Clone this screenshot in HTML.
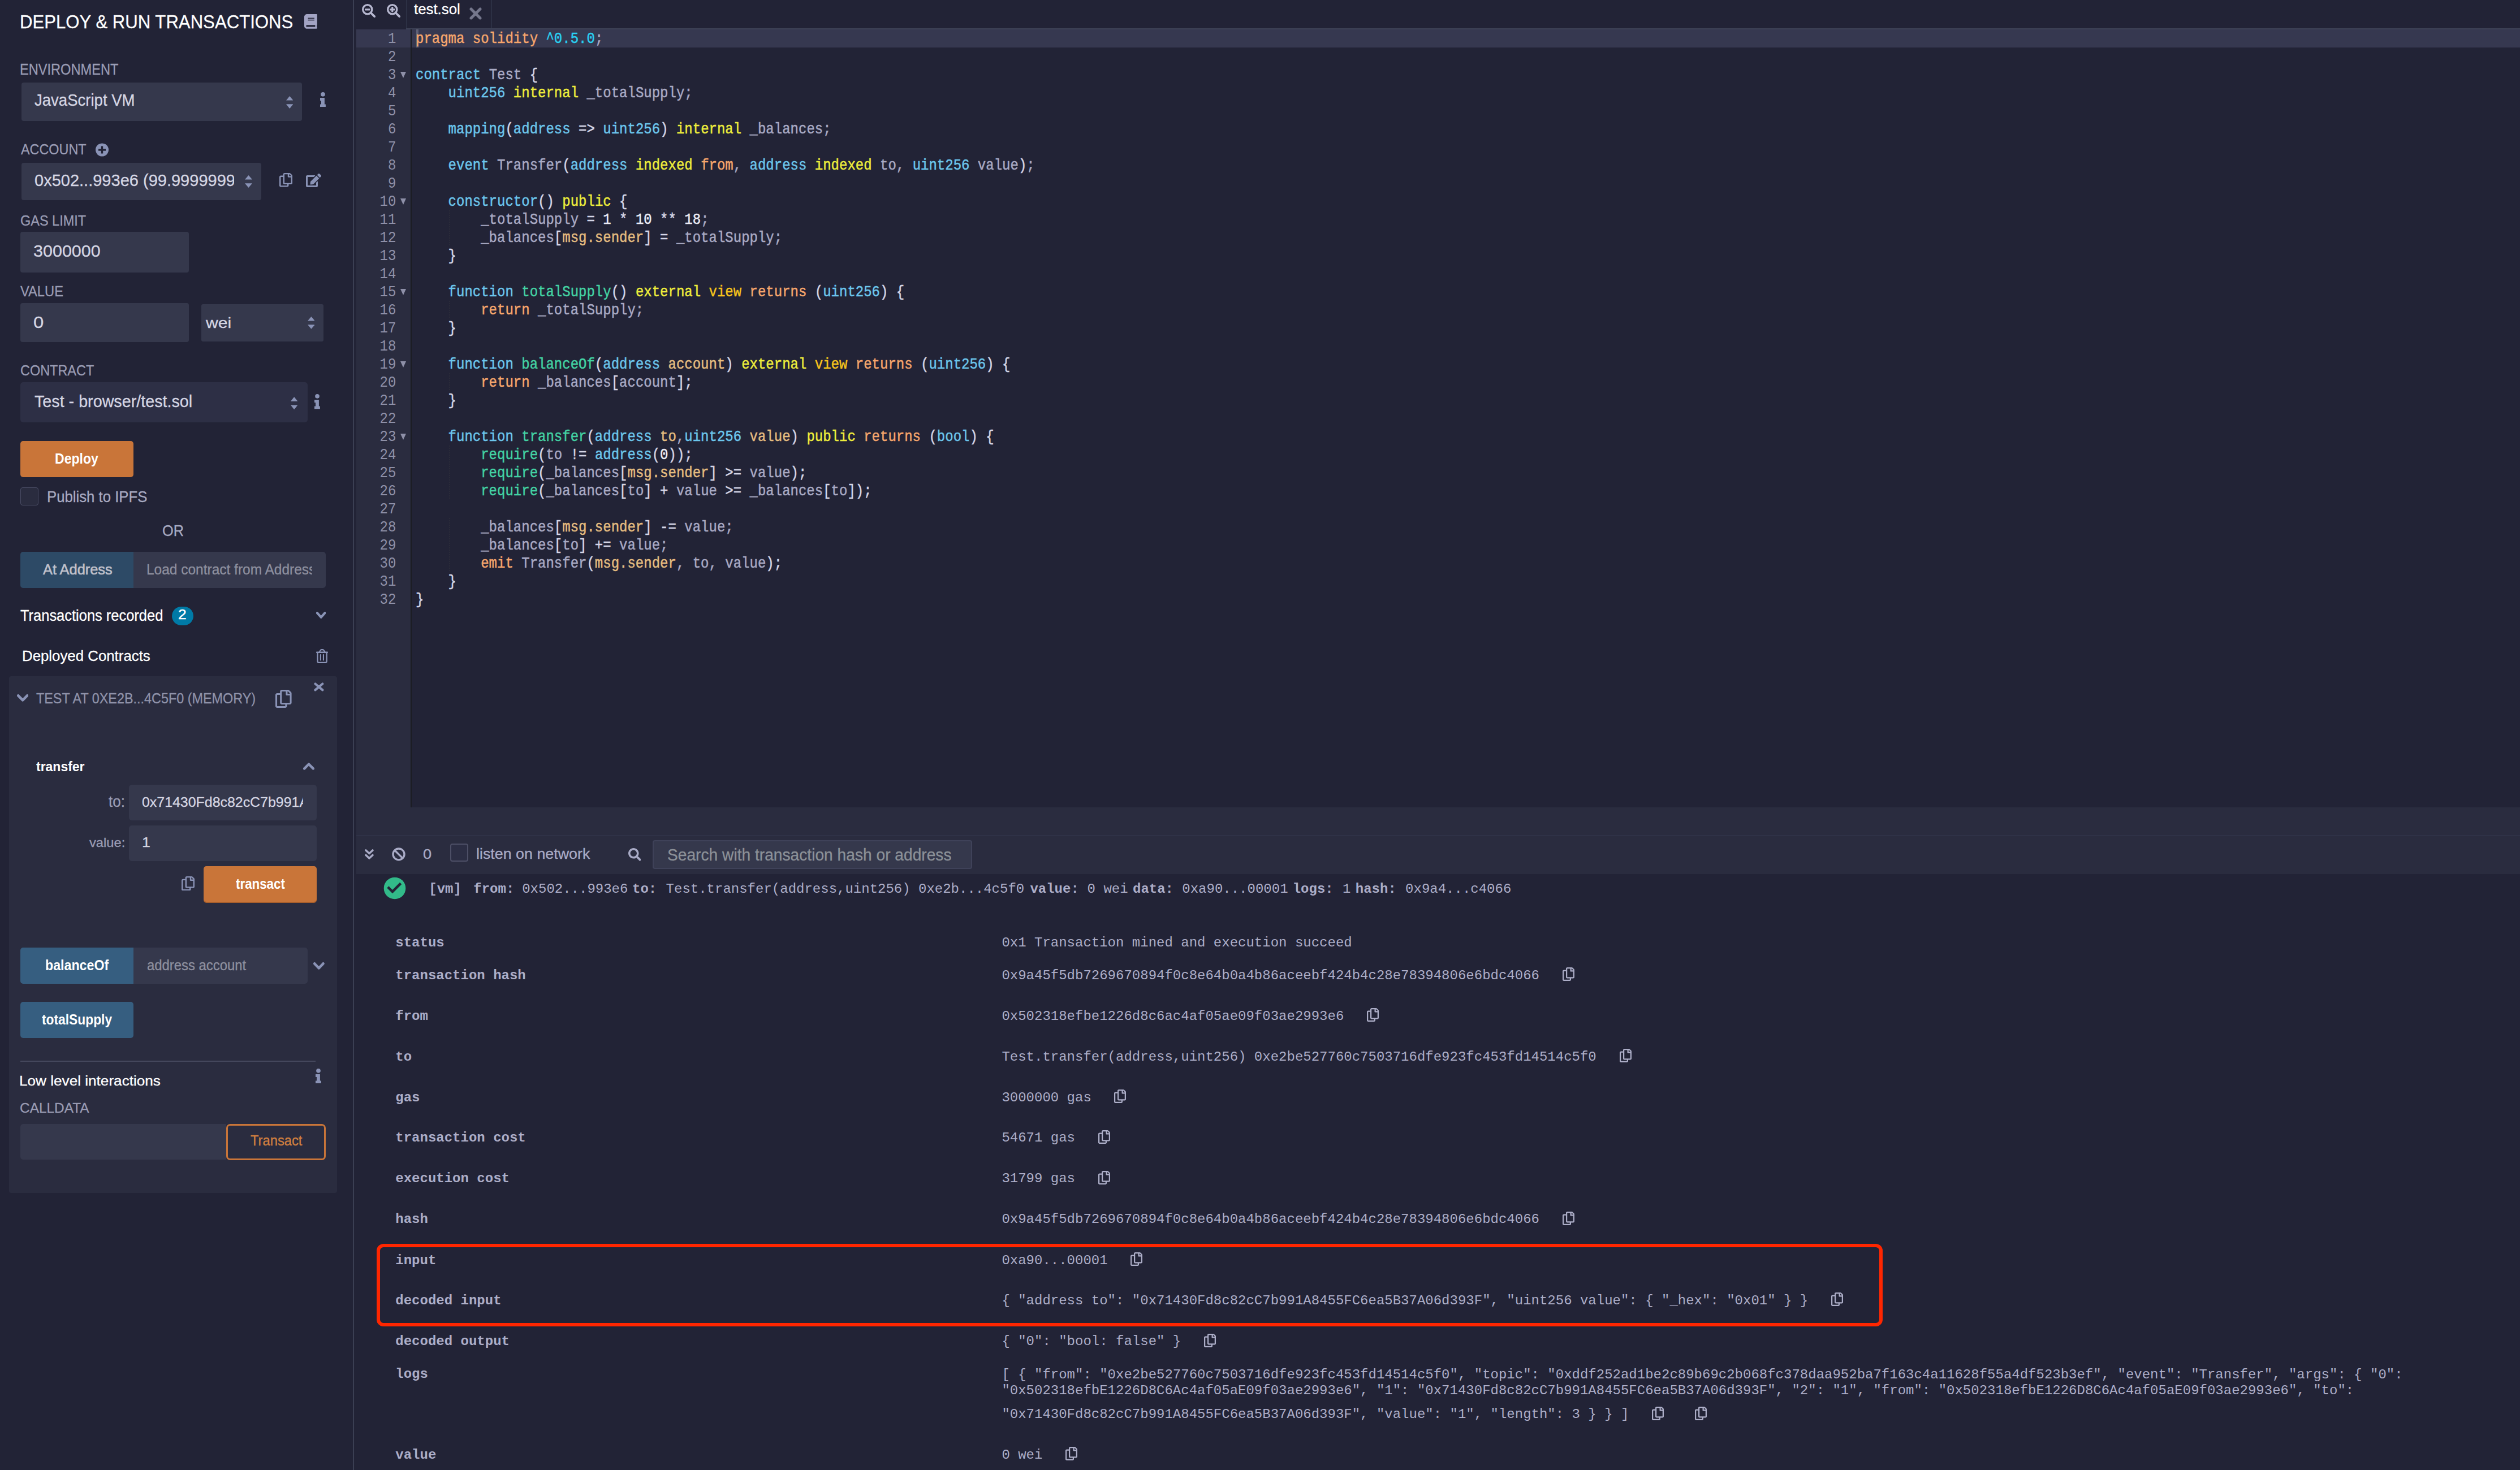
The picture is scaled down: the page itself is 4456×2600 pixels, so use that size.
<!DOCTYPE html>
<html><head><meta charset="utf-8"><style>
html,body{margin:0;padding:0}
body{width:4456px;height:2600px;background:#222336;position:relative;overflow:hidden;font-family:'Liberation Sans',sans-serif}
body div, body svg{position:absolute;box-sizing:border-box}
body div div{position:absolute}
</style></head><body>
<div style="left:35.41px;top:22.03px;font-family:'Liberation Sans';font-weight:normal;font-size:33.14px;line-height:33.14px;color:#ffffff;white-space:pre;transform:scaleX(0.9399);transform-origin:0 0;-webkit-text-stroke:0.3px;">DEPLOY &amp; RUN TRANSACTIONS</div>
<svg style="left:538.2px;top:25.3px;width:22.799999999999955px;height:25.8px;" viewBox="0 0 448 512" preserveAspectRatio="none"><path d="M448 360V24c0-13.3-10.7-24-24-24H96C43 0 0 43 0 96v320c0 53 43 96 96 96h328c13.3 0 24-10.7 24-24v-16c0-7.5-3.5-14.3-8.9-18.7-4.2-15.4-4.2-59.3 0-74.7 5.4-4.3 8.9-11.1 8.9-18.6zM128 134c0-3.3 2.7-6 6-6h212c3.3 0 6 2.7 6 6v20c0 3.3-2.7 6-6 6H134c-3.3 0-6-2.7-6-6v-20zm0 64c0-3.3 2.7-6 6-6h212c3.3 0 6 2.7 6 6v20c0 3.3-2.7 6-6 6H134c-3.3 0-6-2.7-6-6v-20zm253.4 250H96c-17.7 0-32-14.3-32-32 0-17.6 14.4-32 32-32h285.4c-1.9 17.1-1.9 46.9 0 64z" fill="#a3a4c4"/></svg>
<div style="left:34.81px;top:109.97px;font-family:'Liberation Sans';font-weight:normal;font-size:26.86px;line-height:26.86px;color:#9a9cb4;white-space:pre;transform:scaleX(0.8785);transform-origin:0 0;-webkit-text-stroke:0.3px;">ENVIRONMENT</div>
<div style="left:38px;top:146px;width:496px;height:68px;background:#35384c;border-radius:4px"></div>
<div style="left:61.45px;top:163.21px;font-family:'Liberation Sans';font-weight:normal;font-size:29.17px;line-height:29.17px;color:#d5d6e3;white-space:pre;transform:scaleX(0.9447);transform-origin:0 0;-webkit-text-stroke:0.3px;">JavaScript VM</div>
<svg style="left:505.6px;top:170px;width:12.399999999999977px;height:22px;" viewBox="0 0 12.4 22.4" preserveAspectRatio="none"><polygon points="0,7.7 6.2,0 12.4,7.7" fill="#8a93b6"/><polygon points="0,14.6 6.2,22.4 12.4,14.6" fill="#8a93b6"/></svg>
<svg style="left:566px;top:163px;width:10px;height:26.19999999999999px;" viewBox="0 0 10 26.2" preserveAspectRatio="none"><circle cx="5" cy="3.85" r="3.85" fill="#8a93b6"/><polygon points="0,10 7.9,10 7.9,21.6 9.9,21.6 9.9,26.2 0,26.2 0,21.6 2,21.6 2,15 0,15" fill="#8a93b6"/></svg>
<div style="left:37.00px;top:252.14px;font-family:'Liberation Sans';font-weight:normal;font-size:25.71px;line-height:25.71px;color:#9a9cb4;white-space:pre;transform:scaleX(0.9090);transform-origin:0 0;-webkit-text-stroke:0.3px;">ACCOUNT</div>
<svg style="left:169px;top:253px;width:23px;height:24px;" viewBox="0 0 23 24" preserveAspectRatio="none"><circle cx="11.5" cy="12" r="11.5" fill="#8a93b6"/><rect x="9.8" y="5.5" width="3.4" height="13" fill="#222336"/><rect x="5" y="10.3" width="13" height="3.4" fill="#222336"/></svg>
<div style="left:38px;top:288px;width:424px;height:66px;background:#35384c;border-radius:4px"></div>
<div style="left:42.6px;top:289px;width:371.4px;height:60px;overflow:hidden"><div style="left:18.84px;top:15.71px;font-family:'Liberation Sans';font-weight:normal;font-size:28.57px;line-height:28.57px;color:#d5d6e3;white-space:pre;transform:scaleX(1.0158);transform-origin:0 0;-webkit-text-stroke:0.3px;">0x502...993e6 (99.9999999999</div></div>
<svg style="left:433px;top:310px;width:13px;height:22px;" viewBox="0 0 12.4 22.4" preserveAspectRatio="none"><polygon points="0,7.7 6.2,0 12.4,7.7" fill="#8a93b6"/><polygon points="0,14.6 6.2,22.4 12.4,14.6" fill="#8a93b6"/></svg>
<svg style="left:494px;top:306px;width:23px;height:24.600000000000023px;" viewBox="0 0 448 512" preserveAspectRatio="none"><path d="M433.941 65.941l-51.882-51.882A48 48 0 0 0 348.118 0H176c-26.51 0-48 21.49-48 48v48H48c-26.51 0-48 21.49-48 48v320c0 26.51 21.49 48 48 48h224c26.51 0 48-21.49 48-48v-48h80c26.51 0 48-21.49 48-48V99.882a48 48 0 0 0-14.059-33.941zM266 464H54a6 6 0 0 1-6-6V150a6 6 0 0 1 6-6h74v224c0 26.51 21.49 48 48 48h96v42a6 6 0 0 1-6 6zm128-96H182a6 6 0 0 1-6-6V54a6 6 0 0 1 6-6h106v88c0 13.255 10.745 24 24 24h88v202a6 6 0 0 1-6 6zm6-256h-64V48h9.632c1.591 0 3.117.632 4.243 1.757l48.368 48.368a6 6 0 0 1 1.757 4.243V112z" fill="#8a93b6"/></svg>
<svg style="left:541px;top:307px;width:27px;height:24px;" viewBox="0 0 576 512" preserveAspectRatio="none"><path d="M402.6 83.2l90.2 90.2c3.8 3.8 3.8 10 0 13.8L274.4 405.6l-92.8 10.3c-12.4 1.4-22.9-9.1-21.5-21.5l10.3-92.8L388.8 83.2c3.8-3.8 10-3.8 13.8 0zm162-22.9l-48.8-48.8c-15.2-15.2-39.9-15.2-55.2 0l-35.4 35.4c-3.8 3.8-3.8 10 0 13.8l90.2 90.2c3.8 3.8 10 3.8 13.8 0l35.4-35.4c15.2-15.3 15.2-40 0-55.2zM384 346.2V448H64V128h229.8c3.2 0 6.2-1.3 8.5-3.5l40-40c7.6-7.6 2.2-20.5-8.5-20.5H48C21.5 64 0 85.5 0 112v352c0 26.5 21.5 48 48 48h352c26.5 0 48-21.5 48-48V306.2c0-10.7-12.9-16-20.5-8.5l-40 40c-2.2 2.3-3.5 5.3-3.5 8.5z" fill="#8a93b6"/></svg>
<div style="left:35.53px;top:376.50px;font-family:'Liberation Sans';font-weight:normal;font-size:26.00px;line-height:26.00px;color:#9a9cb4;white-space:pre;transform:scaleX(0.9027);transform-origin:0 0;-webkit-text-stroke:0.3px;">GAS LIMIT</div>
<div style="left:36px;top:410px;width:298px;height:72px;background:#35384c;border-radius:4px"></div>
<div style="left:59.18px;top:429.02px;font-family:'Liberation Sans';font-weight:normal;font-size:29.86px;line-height:29.86px;color:#d5d6e3;white-space:pre;transform:scaleX(1.0214);transform-origin:0 0;-webkit-text-stroke:0.3px;">3000000</div>
<div style="left:36.46px;top:502.18px;font-family:'Liberation Sans';font-weight:normal;font-size:26.38px;line-height:26.38px;color:#9a9cb4;white-space:pre;transform:scaleX(0.8986);transform-origin:0 0;-webkit-text-stroke:0.3px;">VALUE</div>
<div style="left:36px;top:536px;width:298px;height:69px;background:#35384c;border-radius:4px"></div>
<div style="left:59.08px;top:555.02px;font-family:'Liberation Sans';font-weight:normal;font-size:29.86px;line-height:29.86px;color:#d5d6e3;white-space:pre;transform:scaleX(1.1025);transform-origin:0 0;-webkit-text-stroke:0.3px;">0</div>
<div style="left:356px;top:538px;width:216px;height:66px;background:#35384c;border-radius:3px"></div>
<div style="left:364.00px;top:557.57px;font-family:'Liberation Sans';font-weight:normal;font-size:26.39px;line-height:26.39px;color:#d5d6e3;white-space:pre;transform:scaleX(1.1395);transform-origin:0 0;-webkit-text-stroke:0.3px;">wei</div>
<svg style="left:543.7px;top:560px;width:12.799999999999955px;height:21.799999999999955px;" viewBox="0 0 12.4 22.4" preserveAspectRatio="none"><polygon points="0,7.7 6.2,0 12.4,7.7" fill="#8a93b6"/><polygon points="0,14.6 6.2,22.4 12.4,14.6" fill="#8a93b6"/></svg>
<div style="left:35.53px;top:642.71px;font-family:'Liberation Sans';font-weight:normal;font-size:25.29px;line-height:25.29px;color:#9a9cb4;white-space:pre;transform:scaleX(0.9274);transform-origin:0 0;-webkit-text-stroke:0.3px;">CONTRACT</div>
<div style="left:36px;top:676px;width:508px;height:71px;background:#2d2f45;border-radius:5px"></div>
<div style="left:61.43px;top:695.83px;font-family:'Liberation Sans';font-weight:normal;font-size:29.03px;line-height:29.03px;color:#d5d6e3;white-space:pre;transform:scaleX(0.9892);transform-origin:0 0;-webkit-text-stroke:0.3px;">Test - browser/test.sol</div>
<svg style="left:513.7px;top:701.5px;width:12.299999999999955px;height:22.299999999999955px;" viewBox="0 0 12.4 22.4" preserveAspectRatio="none"><polygon points="0,7.7 6.2,0 12.4,7.7" fill="#8a93b6"/><polygon points="0,14.6 6.2,22.4 12.4,14.6" fill="#8a93b6"/></svg>
<svg style="left:556px;top:697.4px;width:10px;height:26.200000000000045px;" viewBox="0 0 10 26.2" preserveAspectRatio="none"><circle cx="5" cy="3.85" r="3.85" fill="#8a93b6"/><polygon points="0,10 7.9,10 7.9,21.6 9.9,21.6 9.9,26.2 0,26.2 0,21.6 2,21.6 2,15 0,15" fill="#8a93b6"/></svg>
<div style="left:36px;top:780px;width:200px;height:64px;background:#c97539;border-radius:5px"></div>
<div style="left:96.89px;top:799.28px;font-family:'Liberation Sans';font-weight:bold;font-size:25.56px;line-height:25.56px;color:#ffffff;white-space:pre;transform:scaleX(0.9014);transform-origin:0 0;-webkit-text-stroke:0px;">Deploy</div>
<div style="left:36px;top:862px;width:32px;height:32px;background:#2a2c3f;border:1.5px solid #4a4d65;border-radius:4px"></div>
<div style="left:82.94px;top:865.52px;font-family:'Liberation Sans';font-weight:normal;font-size:26.81px;line-height:26.81px;color:#a9abc2;white-space:pre;transform:scaleX(0.9602);transform-origin:0 0;-webkit-text-stroke:0.3px;">Publish to IPFS</div>
<div style="left:287.14px;top:925.69px;font-family:'Liberation Sans';font-weight:normal;font-size:26.71px;line-height:26.71px;color:#a9abc2;white-space:pre;transform:scaleX(0.9465);transform-origin:0 0;-webkit-text-stroke:0.3px;">OR</div>
<div style="left:36px;top:976px;width:540px;height:64px;background:#35384c;border-radius:5px"></div>
<div style="left:36px;top:976px;width:200px;height:64px;background:#2d4a66;border-radius:5px 0 0 5px"></div>
<div style="left:76.00px;top:995.21px;font-family:'Liberation Sans';font-weight:normal;font-size:25.28px;line-height:25.28px;color:#c0c1cb;white-space:pre;transform:scaleX(1.0038);transform-origin:0 0;-webkit-text-stroke:0.3px;-webkit-text-stroke:0.6px">At Address</div>
<div style="left:240.7px;top:978.5px;width:311.7px;height:58.200000000000045px;overflow:hidden"><div style="left:18.04px;top:16.71px;font-family:'Liberation Sans';font-weight:normal;font-size:25.28px;line-height:25.28px;color:#8e909f;white-space:pre;transform:scaleX(0.9686);transform-origin:0 0;-webkit-text-stroke:0.3px;">Load contract from Address</div></div>
<div style="left:35.69px;top:1075.82px;font-family:'Liberation Sans';font-weight:normal;font-size:26.81px;line-height:26.81px;color:#ffffff;white-space:pre;transform:scaleX(0.9499);transform-origin:0 0;-webkit-text-stroke:0.3px;">Transactions recorded</div>
<div style="left:304px;top:1072.5px;width:38px;height:33.5px;background:#007aa6;border-radius:17px"></div>
<div style="left:315.48px;top:1075.31px;font-family:'Liberation Sans';font-weight:normal;font-size:24.57px;line-height:24.57px;color:#ffffff;white-space:pre;transform:scaleX(1.0705);transform-origin:0 0;-webkit-text-stroke:0.3px;-webkit-text-stroke:0.5px">2</div>
<svg style="left:558.6px;top:1081.5px;width:17.399999999999977px;height:12.200000000000045px;" viewBox="0 0 20 12.5" preserveAspectRatio="none"><polyline points="2.2,2.2 10,10 17.8,2.2" fill="none" stroke="#8a93b6" stroke-width="4.5" stroke-linecap="round" stroke-linejoin="round"/></svg>
<div style="left:38.73px;top:1146.57px;font-family:'Liberation Sans';font-weight:normal;font-size:26.39px;line-height:26.39px;color:#ffffff;white-space:pre;transform:scaleX(0.9789);transform-origin:0 0;-webkit-text-stroke:0.3px;">Deployed Contracts</div>
<svg style="left:559px;top:1148px;width:21px;height:25px;" viewBox="0 0 21 25" preserveAspectRatio="none"><rect x="0" y="4.6" width="21" height="2.4" rx="1" fill="#8a93b6"/><path d="M5.6 5.5L7.6 2.3Q8.2 1.2 9.4 1.2H11.8Q13 1.2 13.6 2.3L15.6 5.5" fill="none" stroke="#8a93b6" stroke-width="2.2"/><path d="M2.5 6.5V21.8Q2.5 23.9 4.6 23.9H16.6Q18.7 23.9 18.7 21.8V6.5" fill="none" stroke="#8a93b6" stroke-width="2.3"/><rect x="6.8" y="9" width="2.1" height="11.6" rx="1" fill="#8a93b6"/><rect x="11.9" y="9" width="2.1" height="11.6" rx="1" fill="#8a93b6"/></svg>
<div style="left:16px;top:1196px;width:580px;height:914px;background:#2a2c3f;border-radius:4px"></div>
<svg style="left:30px;top:1227.5px;width:20.299999999999997px;height:13.0px;" viewBox="0 0 20 12.5" preserveAspectRatio="none"><polyline points="2.2,2.2 10,10 17.8,2.2" fill="none" stroke="#8a93b6" stroke-width="4.5" stroke-linecap="round" stroke-linejoin="round"/></svg>
<div style="left:63.53px;top:1223.47px;font-family:'Liberation Sans';font-weight:normal;font-size:24.86px;line-height:24.86px;color:#8f92a9;white-space:pre;transform:scaleX(0.9404);transform-origin:0 0;-webkit-text-stroke:0.3px;">TEST AT 0XE2B...4C5F0 (MEMORY)</div>
<svg style="left:487px;top:1220px;width:28.600000000000023px;height:32px;" viewBox="0 0 448 512" preserveAspectRatio="none"><path d="M433.941 65.941l-51.882-51.882A48 48 0 0 0 348.118 0H176c-26.51 0-48 21.49-48 48v48H48c-26.51 0-48 21.49-48 48v320c0 26.51 21.49 48 48 48h224c26.51 0 48-21.49 48-48v-48h80c26.51 0 48-21.49 48-48V99.882a48 48 0 0 0-14.059-33.941zM266 464H54a6 6 0 0 1-6-6V150a6 6 0 0 1 6-6h74v224c0 26.51 21.49 48 48 48h96v42a6 6 0 0 1-6 6zm128-96H182a6 6 0 0 1-6-6V54a6 6 0 0 1 6-6h106v88c0 13.255 10.745 24 24 24h88v202a6 6 0 0 1-6 6zm6-256h-64V48h9.632c1.591 0 3.117.632 4.243 1.757l48.368 48.368a6 6 0 0 1 1.757 4.243V112z" fill="#8a93b6"/></svg>
<svg style="left:555px;top:1207px;width:17.799999999999955px;height:15.900000000000091px;" viewBox="0 0 18 16" preserveAspectRatio="none"><path d="M2.5 2.5l13 11M15.5 2.5l-13 11" stroke="#8a93b6" stroke-width="4.2" stroke-linecap="round"/></svg>
<div style="left:63.77px;top:1343.86px;font-family:'Liberation Sans';font-weight:bold;font-size:24.17px;line-height:24.17px;color:#ffffff;white-space:pre;transform:scaleX(0.9506);transform-origin:0 0;-webkit-text-stroke:0px;">transfer</div>
<svg style="left:536px;top:1349.4px;width:20px;height:12.599999999999909px;" viewBox="0 0 20 12.5" preserveAspectRatio="none"><polyline points="2.2,10.3 10,2.5 17.8,10.3" fill="none" stroke="#8a93b6" stroke-width="4.5" stroke-linecap="round" stroke-linejoin="round"/></svg>
<div style="left:192.44px;top:1405.25px;font-family:'Liberation Sans';font-weight:normal;font-size:26.77px;line-height:26.77px;color:#9a9cb4;white-space:pre;transform:scaleX(0.9727);transform-origin:0 0;-webkit-text-stroke:0.3px;">to:</div>
<div style="left:228px;top:1388px;width:332px;height:63px;background:#35384c;border-radius:5px"></div>
<div style="left:231.7px;top:1390.6px;width:304.3px;height:57.700000000000045px;overflow:hidden"><div style="left:19.00px;top:16.80px;font-family:'Liberation Sans';font-weight:normal;font-size:24.58px;line-height:24.58px;color:#d5d6e3;white-space:pre;transform:scaleX(1.0135);transform-origin:0 0;-webkit-text-stroke:0.3px;">0x71430Fd8c82cC7b991A8455FC6ea5B37A06d393F</div></div>
<div style="left:157.80px;top:1480.36px;font-family:'Liberation Sans';font-weight:normal;font-size:22.64px;line-height:22.64px;color:#9a9cb4;white-space:pre;transform:scaleX(1.0478);transform-origin:0 0;-webkit-text-stroke:0.3px;">value:</div>
<div style="left:228px;top:1460px;width:332px;height:63px;background:#35384c;border-radius:5px"></div>
<div style="left:250.86px;top:1478.92px;font-family:'Liberation Sans';font-weight:normal;font-size:23.62px;line-height:23.62px;color:#d5d6e3;white-space:pre;transform:scaleX(1.1321);transform-origin:0 0;-webkit-text-stroke:0.3px;">1</div>
<svg style="left:321px;top:1549.5px;width:23px;height:25.299999999999955px;" viewBox="0 0 448 512" preserveAspectRatio="none"><path d="M433.941 65.941l-51.882-51.882A48 48 0 0 0 348.118 0H176c-26.51 0-48 21.49-48 48v48H48c-26.51 0-48 21.49-48 48v320c0 26.51 21.49 48 48 48h224c26.51 0 48-21.49 48-48v-48h80c26.51 0 48-21.49 48-48V99.882a48 48 0 0 0-14.059-33.941zM266 464H54a6 6 0 0 1-6-6V150a6 6 0 0 1 6-6h74v224c0 26.51 21.49 48 48 48h96v42a6 6 0 0 1-6 6zm128-96H182a6 6 0 0 1-6-6V54a6 6 0 0 1 6-6h106v88c0 13.255 10.745 24 24 24h88v202a6 6 0 0 1-6 6zm6-256h-64V48h9.632c1.591 0 3.117.632 4.243 1.757l48.368 48.368a6 6 0 0 1 1.757 4.243V112z" fill="#8a93b6"/></svg>
<div style="left:360px;top:1532px;width:200px;height:63px;background:#c97539;border-radius:5px;box-shadow:0 2px 0 #a85f2c"></div>
<div style="left:417.48px;top:1550.82px;font-family:'Liberation Sans';font-weight:bold;font-size:24.92px;line-height:24.92px;color:#ffffff;white-space:pre;transform:scaleX(0.8968);transform-origin:0 0;-webkit-text-stroke:0px;">transact</div>
<div style="left:36px;top:1676px;width:508px;height:64px;background:#35384c;border-radius:5px"></div>
<div style="left:36px;top:1676px;width:200px;height:64px;background:#365e80;border-radius:5px 0 0 5px"></div>
<div style="left:80.38px;top:1694.70px;font-family:'Liberation Sans';font-weight:bold;font-size:25.42px;line-height:25.42px;color:#ffffff;white-space:pre;transform:scaleX(0.9131);transform-origin:0 0;-webkit-text-stroke:0px;">balanceOf</div>
<div style="left:259.74px;top:1694.70px;font-family:'Liberation Sans';font-weight:normal;font-size:25.42px;line-height:25.42px;color:#8e909f;white-space:pre;transform:scaleX(0.9396);transform-origin:0 0;-webkit-text-stroke:0.3px;">address account</div>
<svg style="left:554.3px;top:1702px;width:19.700000000000045px;height:13px;" viewBox="0 0 20 12.5" preserveAspectRatio="none"><polyline points="2.2,2.2 10,10 17.8,2.2" fill="none" stroke="#8a93b6" stroke-width="4.5" stroke-linecap="round" stroke-linejoin="round"/></svg>
<div style="left:36px;top:1772px;width:200px;height:64px;background:#365e80;border-radius:5px"></div>
<div style="left:73.77px;top:1790.56px;font-family:'Liberation Sans';font-weight:bold;font-size:25.69px;line-height:25.69px;color:#ffffff;white-space:pre;transform:scaleX(0.8873);transform-origin:0 0;-webkit-text-stroke:0px;">totalSupply</div>
<div style="left:36px;top:1876px;width:522px;height:2px;background:#44475c;"></div>
<div style="left:34.11px;top:1899.79px;font-family:'Liberation Sans';font-weight:normal;font-size:24.72px;line-height:24.72px;color:#ffffff;white-space:pre;transform:scaleX(1.0575);transform-origin:0 0;-webkit-text-stroke:0.3px;">Low level interactions</div>
<svg style="left:557.8px;top:1889.5px;width:10.0px;height:26.200000000000045px;" viewBox="0 0 10 26.2" preserveAspectRatio="none"><circle cx="5" cy="3.85" r="3.85" fill="#8a93b6"/><polygon points="0,10 7.9,10 7.9,21.6 9.9,21.6 9.9,26.2 0,26.2 0,21.6 2,21.6 2,15 0,15" fill="#8a93b6"/></svg>
<div style="left:34.98px;top:1947.64px;font-family:'Liberation Sans';font-weight:normal;font-size:24.43px;line-height:24.43px;color:#9a9cb4;white-space:pre;transform:scaleX(0.9995);transform-origin:0 0;-webkit-text-stroke:0.3px;">CALLDATA</div>
<div style="left:36px;top:1988px;width:364px;height:63px;background:#35384c;border-radius:5px 0 0 5px"></div>
<div style="left:400px;top:1988px;width:176px;height:64px;background:transparent;border:3px solid #c97539;border-radius:7px"></div>
<div style="left:442.53px;top:2004.97px;font-family:'Liberation Sans';font-weight:normal;font-size:25.22px;line-height:25.22px;color:#d3803f;white-space:pre;transform:scaleX(0.9412);transform-origin:0 0;-webkit-text-stroke:0.3px;">Transact</div>
<div style="left:624px;top:0px;width:2px;height:2600px;background:#3b3f53;"></div>
<svg style="left:640px;top:6.9px;width:24px;height:24.0px;" viewBox="0 0 24 24" preserveAspectRatio="none"><circle cx="9.75" cy="9.75" r="8.1" fill="none" stroke="#b7b8d0" stroke-width="3.3"/><line x1="15.5" y1="15.5" x2="22.2" y2="22.2" stroke="#b7b8d0" stroke-width="3.8" stroke-linecap="round"/><rect x="5" y="8.2" width="9.5" height="3.2" rx="1" fill="#b7b8d0"/></svg>
<svg style="left:683.8px;top:6.9px;width:24.0px;height:24.0px;" viewBox="0 0 24 24" preserveAspectRatio="none"><circle cx="9.75" cy="9.75" r="8.1" fill="none" stroke="#b7b8d0" stroke-width="3.3"/><line x1="15.5" y1="15.5" x2="22.2" y2="22.2" stroke="#b7b8d0" stroke-width="3.8" stroke-linecap="round"/><rect x="5" y="8.2" width="9.5" height="3.2" rx="1" fill="#b7b8d0"/><rect x="8.15" y="5" width="3.2" height="9.5" rx="1" fill="#b7b8d0"/></svg>
<div style="left:718px;top:0px;width:2px;height:52px;background:#2c3044;"></div>
<div style="left:868px;top:0px;width:2px;height:52px;background:#2c3044;"></div>
<div style="left:718px;top:50px;width:3738px;height:2px;background:#3d4256;"></div>
<div style="left:732.14px;top:4.06px;font-family:'Liberation Sans';font-weight:normal;font-size:25.69px;line-height:25.69px;color:#ffffff;white-space:pre;transform:scaleX(1.0044);transform-origin:0 0;-webkit-text-stroke:0.3px;">test.sol</div>
<svg style="left:830px;top:13.1px;width:22px;height:21.9px;" viewBox="0 0 22 22" preserveAspectRatio="none"><path d="M3 3l16 16M19 3L3 19" stroke="#75778c" stroke-width="5" stroke-linecap="round"/></svg>
<div style="left:630px;top:52px;width:96px;height:1376px;background:#2a2c3f;"></div>
<div style="left:726px;top:52px;width:2px;height:1376px;background:#1b1c22;"></div>
<div style="left:630px;top:52px;width:96px;height:32px;background:#363850;"></div>
<div style="left:728px;top:52px;width:3728px;height:32px;background:#363850;"></div>
<div style="left:736px;top:52px;width:4px;height:32px;background:#5d6075;"></div>
<div style="left:600.4px;top:57.76px;width:100px;text-align:right;font:24px/24px 'Liberation Mono';color:#8e90a8;white-space:pre;transform:scaleY(1.12);transform-origin:0 18.24px">1</div>
<div style="left:600.4px;top:89.76px;width:100px;text-align:right;font:24px/24px 'Liberation Mono';color:#8e90a8;white-space:pre;transform:scaleY(1.12);transform-origin:0 18.24px">2</div>
<div style="left:600.4px;top:121.76px;width:100px;text-align:right;font:24px/24px 'Liberation Mono';color:#8e90a8;white-space:pre;transform:scaleY(1.12);transform-origin:0 18.24px">3</div>
<div style="left:600.4px;top:153.76px;width:100px;text-align:right;font:24px/24px 'Liberation Mono';color:#8e90a8;white-space:pre;transform:scaleY(1.12);transform-origin:0 18.24px">4</div>
<div style="left:600.4px;top:185.76px;width:100px;text-align:right;font:24px/24px 'Liberation Mono';color:#8e90a8;white-space:pre;transform:scaleY(1.12);transform-origin:0 18.24px">5</div>
<div style="left:600.4px;top:217.76px;width:100px;text-align:right;font:24px/24px 'Liberation Mono';color:#8e90a8;white-space:pre;transform:scaleY(1.12);transform-origin:0 18.24px">6</div>
<div style="left:600.4px;top:249.76px;width:100px;text-align:right;font:24px/24px 'Liberation Mono';color:#8e90a8;white-space:pre;transform:scaleY(1.12);transform-origin:0 18.24px">7</div>
<div style="left:600.4px;top:281.76px;width:100px;text-align:right;font:24px/24px 'Liberation Mono';color:#8e90a8;white-space:pre;transform:scaleY(1.12);transform-origin:0 18.24px">8</div>
<div style="left:600.4px;top:313.76px;width:100px;text-align:right;font:24px/24px 'Liberation Mono';color:#8e90a8;white-space:pre;transform:scaleY(1.12);transform-origin:0 18.24px">9</div>
<div style="left:600.4px;top:345.76px;width:100px;text-align:right;font:24px/24px 'Liberation Mono';color:#8e90a8;white-space:pre;transform:scaleY(1.12);transform-origin:0 18.24px">10</div>
<div style="left:600.4px;top:377.76px;width:100px;text-align:right;font:24px/24px 'Liberation Mono';color:#8e90a8;white-space:pre;transform:scaleY(1.12);transform-origin:0 18.24px">11</div>
<div style="left:600.4px;top:409.76px;width:100px;text-align:right;font:24px/24px 'Liberation Mono';color:#8e90a8;white-space:pre;transform:scaleY(1.12);transform-origin:0 18.24px">12</div>
<div style="left:600.4px;top:441.76px;width:100px;text-align:right;font:24px/24px 'Liberation Mono';color:#8e90a8;white-space:pre;transform:scaleY(1.12);transform-origin:0 18.24px">13</div>
<div style="left:600.4px;top:473.76px;width:100px;text-align:right;font:24px/24px 'Liberation Mono';color:#8e90a8;white-space:pre;transform:scaleY(1.12);transform-origin:0 18.24px">14</div>
<div style="left:600.4px;top:505.76px;width:100px;text-align:right;font:24px/24px 'Liberation Mono';color:#8e90a8;white-space:pre;transform:scaleY(1.12);transform-origin:0 18.24px">15</div>
<div style="left:600.4px;top:537.76px;width:100px;text-align:right;font:24px/24px 'Liberation Mono';color:#8e90a8;white-space:pre;transform:scaleY(1.12);transform-origin:0 18.24px">16</div>
<div style="left:600.4px;top:569.76px;width:100px;text-align:right;font:24px/24px 'Liberation Mono';color:#8e90a8;white-space:pre;transform:scaleY(1.12);transform-origin:0 18.24px">17</div>
<div style="left:600.4px;top:601.76px;width:100px;text-align:right;font:24px/24px 'Liberation Mono';color:#8e90a8;white-space:pre;transform:scaleY(1.12);transform-origin:0 18.24px">18</div>
<div style="left:600.4px;top:633.76px;width:100px;text-align:right;font:24px/24px 'Liberation Mono';color:#8e90a8;white-space:pre;transform:scaleY(1.12);transform-origin:0 18.24px">19</div>
<div style="left:600.4px;top:665.76px;width:100px;text-align:right;font:24px/24px 'Liberation Mono';color:#8e90a8;white-space:pre;transform:scaleY(1.12);transform-origin:0 18.24px">20</div>
<div style="left:600.4px;top:697.76px;width:100px;text-align:right;font:24px/24px 'Liberation Mono';color:#8e90a8;white-space:pre;transform:scaleY(1.12);transform-origin:0 18.24px">21</div>
<div style="left:600.4px;top:729.76px;width:100px;text-align:right;font:24px/24px 'Liberation Mono';color:#8e90a8;white-space:pre;transform:scaleY(1.12);transform-origin:0 18.24px">22</div>
<div style="left:600.4px;top:761.76px;width:100px;text-align:right;font:24px/24px 'Liberation Mono';color:#8e90a8;white-space:pre;transform:scaleY(1.12);transform-origin:0 18.24px">23</div>
<div style="left:600.4px;top:793.76px;width:100px;text-align:right;font:24px/24px 'Liberation Mono';color:#8e90a8;white-space:pre;transform:scaleY(1.12);transform-origin:0 18.24px">24</div>
<div style="left:600.4px;top:825.76px;width:100px;text-align:right;font:24px/24px 'Liberation Mono';color:#8e90a8;white-space:pre;transform:scaleY(1.12);transform-origin:0 18.24px">25</div>
<div style="left:600.4px;top:857.76px;width:100px;text-align:right;font:24px/24px 'Liberation Mono';color:#8e90a8;white-space:pre;transform:scaleY(1.12);transform-origin:0 18.24px">26</div>
<div style="left:600.4px;top:889.76px;width:100px;text-align:right;font:24px/24px 'Liberation Mono';color:#8e90a8;white-space:pre;transform:scaleY(1.12);transform-origin:0 18.24px">27</div>
<div style="left:600.4px;top:921.76px;width:100px;text-align:right;font:24px/24px 'Liberation Mono';color:#8e90a8;white-space:pre;transform:scaleY(1.12);transform-origin:0 18.24px">28</div>
<div style="left:600.4px;top:953.76px;width:100px;text-align:right;font:24px/24px 'Liberation Mono';color:#8e90a8;white-space:pre;transform:scaleY(1.12);transform-origin:0 18.24px">29</div>
<div style="left:600.4px;top:985.76px;width:100px;text-align:right;font:24px/24px 'Liberation Mono';color:#8e90a8;white-space:pre;transform:scaleY(1.12);transform-origin:0 18.24px">30</div>
<div style="left:600.4px;top:1017.76px;width:100px;text-align:right;font:24px/24px 'Liberation Mono';color:#8e90a8;white-space:pre;transform:scaleY(1.12);transform-origin:0 18.24px">31</div>
<div style="left:600.4px;top:1049.76px;width:100px;text-align:right;font:24px/24px 'Liberation Mono';color:#8e90a8;white-space:pre;transform:scaleY(1.12);transform-origin:0 18.24px">32</div>
<svg style="left:708px;top:127px;width:10px;height:11px;" viewBox="0 0 10 11" preserveAspectRatio="none"><polygon points="0,0 10,0 5,11" fill="#8e90a8"/></svg>
<svg style="left:708px;top:351px;width:10px;height:11px;" viewBox="0 0 10 11" preserveAspectRatio="none"><polygon points="0,0 10,0 5,11" fill="#8e90a8"/></svg>
<svg style="left:708px;top:511px;width:10px;height:11px;" viewBox="0 0 10 11" preserveAspectRatio="none"><polygon points="0,0 10,0 5,11" fill="#8e90a8"/></svg>
<svg style="left:708px;top:639px;width:10px;height:11px;" viewBox="0 0 10 11" preserveAspectRatio="none"><polygon points="0,0 10,0 5,11" fill="#8e90a8"/></svg>
<svg style="left:708px;top:767px;width:10px;height:11px;" viewBox="0 0 10 11" preserveAspectRatio="none"><polygon points="0,0 10,0 5,11" fill="#8e90a8"/></svg>
<div style="left:735px;top:57.76px;font:24px/24px 'Liberation Mono';white-space:pre;transform:scaleY(1.12);transform-origin:0 18.24px;-webkit-text-stroke:0.45px"><span style="color:#f6a66c">pragma solidity</span><span style="color:#a9aac4"> </span><span style="color:#2ad0f0">^0.5.0</span><span style="color:#a9aac4">;</span></div>
<div style="left:735px;top:121.76px;font:24px/24px 'Liberation Mono';white-space:pre;transform:scaleY(1.12);transform-origin:0 18.24px;-webkit-text-stroke:0.45px"><span style="color:#6cc6ec">contract</span><span style="color:#a9aac4"> </span><span style="color:#a9aac4">Test</span><span style="color:#d5d6e6"> {</span></div>
<div style="left:735px;top:153.76px;font:24px/24px 'Liberation Mono';white-space:pre;transform:scaleY(1.12);transform-origin:0 18.24px;-webkit-text-stroke:0.45px"><span style="color:#a9aac4">    </span><span style="color:#6cc6ec">uint256</span><span style="color:#a9aac4"> </span><span style="color:#eded3c">internal</span><span style="color:#a9aac4"> _totalSupply;</span></div>
<div style="left:735px;top:217.76px;font:24px/24px 'Liberation Mono';white-space:pre;transform:scaleY(1.12);transform-origin:0 18.24px;-webkit-text-stroke:0.45px"><span style="color:#a9aac4">    </span><span style="color:#6cc6ec">mapping</span><span style="color:#d5d6e6">(</span><span style="color:#6cc6ec">address</span><span style="color:#a9aac4"> </span><span style="color:#d5d6e6">=&gt;</span><span style="color:#a9aac4"> </span><span style="color:#6cc6ec">uint256</span><span style="color:#d5d6e6">)</span><span style="color:#a9aac4"> </span><span style="color:#eded3c">internal</span><span style="color:#a9aac4"> _balances;</span></div>
<div style="left:735px;top:281.76px;font:24px/24px 'Liberation Mono';white-space:pre;transform:scaleY(1.12);transform-origin:0 18.24px;-webkit-text-stroke:0.45px"><span style="color:#a9aac4">    </span><span style="color:#6cc6ec">event</span><span style="color:#a9aac4"> Transfer</span><span style="color:#d5d6e6">(</span><span style="color:#6cc6ec">address</span><span style="color:#a9aac4"> </span><span style="color:#eded3c">indexed</span><span style="color:#a9aac4"> </span><span style="color:#f6a66c">from</span><span style="color:#a9aac4">, </span><span style="color:#6cc6ec">address</span><span style="color:#a9aac4"> </span><span style="color:#eded3c">indexed</span><span style="color:#a9aac4"> to, </span><span style="color:#6cc6ec">uint256</span><span style="color:#a9aac4"> value</span><span style="color:#d5d6e6">)</span><span style="color:#a9aac4">;</span></div>
<div style="left:735px;top:345.76px;font:24px/24px 'Liberation Mono';white-space:pre;transform:scaleY(1.12);transform-origin:0 18.24px;-webkit-text-stroke:0.45px"><span style="color:#a9aac4">    </span><span style="color:#6cc6ec">constructor</span><span style="color:#d5d6e6">()</span><span style="color:#a9aac4"> </span><span style="color:#eded3c">public</span><span style="color:#d5d6e6"> {</span></div>
<div style="left:735px;top:377.76px;font:24px/24px 'Liberation Mono';white-space:pre;transform:scaleY(1.12);transform-origin:0 18.24px;-webkit-text-stroke:0.45px"><span style="color:#a9aac4">        _totalSupply</span><span style="color:#d5d6e6"> = </span><span style="color:#ececf5">1</span><span style="color:#d5d6e6"> * </span><span style="color:#ececf5">10</span><span style="color:#d5d6e6"> ** </span><span style="color:#ececf5">18</span><span style="color:#a9aac4">;</span></div>
<div style="left:735px;top:409.76px;font:24px/24px 'Liberation Mono';white-space:pre;transform:scaleY(1.12);transform-origin:0 18.24px;-webkit-text-stroke:0.45px"><span style="color:#a9aac4">        _balances</span><span style="color:#d5d6e6">[</span><span style="color:#e5bd80">msg.sender</span><span style="color:#d5d6e6">]</span><span style="color:#d5d6e6"> = </span><span style="color:#a9aac4">_totalSupply;</span></div>
<div style="left:735px;top:441.76px;font:24px/24px 'Liberation Mono';white-space:pre;transform:scaleY(1.12);transform-origin:0 18.24px;-webkit-text-stroke:0.45px"><span style="color:#d5d6e6">    }</span></div>
<div style="left:735px;top:505.76px;font:24px/24px 'Liberation Mono';white-space:pre;transform:scaleY(1.12);transform-origin:0 18.24px;-webkit-text-stroke:0.45px"><span style="color:#a9aac4">    </span><span style="color:#6cc6ec">function</span><span style="color:#a9aac4"> </span><span style="color:#43d2a3">totalSupply</span><span style="color:#d5d6e6">()</span><span style="color:#a9aac4"> </span><span style="color:#eded3c">external</span><span style="color:#a9aac4"> </span><span style="color:#f6c41c">view</span><span style="color:#a9aac4"> </span><span style="color:#f6a66c">returns</span><span style="color:#d5d6e6"> (</span><span style="color:#6cc6ec">uint256</span><span style="color:#d5d6e6">)</span><span style="color:#d5d6e6"> {</span></div>
<div style="left:735px;top:537.76px;font:24px/24px 'Liberation Mono';white-space:pre;transform:scaleY(1.12);transform-origin:0 18.24px;-webkit-text-stroke:0.45px"><span style="color:#a9aac4">        </span><span style="color:#f6a66c">return</span><span style="color:#a9aac4"> _totalSupply;</span></div>
<div style="left:735px;top:569.76px;font:24px/24px 'Liberation Mono';white-space:pre;transform:scaleY(1.12);transform-origin:0 18.24px;-webkit-text-stroke:0.45px"><span style="color:#d5d6e6">    }</span></div>
<div style="left:735px;top:633.76px;font:24px/24px 'Liberation Mono';white-space:pre;transform:scaleY(1.12);transform-origin:0 18.24px;-webkit-text-stroke:0.45px"><span style="color:#a9aac4">    </span><span style="color:#6cc6ec">function</span><span style="color:#a9aac4"> </span><span style="color:#43d2a3">balanceOf</span><span style="color:#d5d6e6">(</span><span style="color:#6cc6ec">address</span><span style="color:#a9aac4"> </span><span style="color:#e5bd80">account</span><span style="color:#d5d6e6">)</span><span style="color:#a9aac4"> </span><span style="color:#eded3c">external</span><span style="color:#a9aac4"> </span><span style="color:#f6c41c">view</span><span style="color:#a9aac4"> </span><span style="color:#f6a66c">returns</span><span style="color:#d5d6e6"> (</span><span style="color:#6cc6ec">uint256</span><span style="color:#d5d6e6">)</span><span style="color:#d5d6e6"> {</span></div>
<div style="left:735px;top:665.76px;font:24px/24px 'Liberation Mono';white-space:pre;transform:scaleY(1.12);transform-origin:0 18.24px;-webkit-text-stroke:0.45px"><span style="color:#a9aac4">        </span><span style="color:#f6a66c">return</span><span style="color:#a9aac4"> _balances</span><span style="color:#d5d6e6">[</span><span style="color:#a9aac4">account</span><span style="color:#d5d6e6">];</span></div>
<div style="left:735px;top:697.76px;font:24px/24px 'Liberation Mono';white-space:pre;transform:scaleY(1.12);transform-origin:0 18.24px;-webkit-text-stroke:0.45px"><span style="color:#d5d6e6">    }</span></div>
<div style="left:735px;top:761.76px;font:24px/24px 'Liberation Mono';white-space:pre;transform:scaleY(1.12);transform-origin:0 18.24px;-webkit-text-stroke:0.45px"><span style="color:#a9aac4">    </span><span style="color:#6cc6ec">function</span><span style="color:#a9aac4"> </span><span style="color:#43d2a3">transfer</span><span style="color:#d5d6e6">(</span><span style="color:#6cc6ec">address</span><span style="color:#a9aac4"> </span><span style="color:#e5bd80">to</span><span style="color:#a9aac4">,</span><span style="color:#6cc6ec">uint256</span><span style="color:#a9aac4"> </span><span style="color:#e5bd80">value</span><span style="color:#d5d6e6">)</span><span style="color:#a9aac4"> </span><span style="color:#eded3c">public</span><span style="color:#a9aac4"> </span><span style="color:#f6a66c">returns</span><span style="color:#d5d6e6"> (</span><span style="color:#6cc6ec">bool</span><span style="color:#d5d6e6">)</span><span style="color:#d5d6e6"> {</span></div>
<div style="left:735px;top:793.76px;font:24px/24px 'Liberation Mono';white-space:pre;transform:scaleY(1.12);transform-origin:0 18.24px;-webkit-text-stroke:0.45px"><span style="color:#a9aac4">        </span><span style="color:#43d2a3">require</span><span style="color:#d5d6e6">(</span><span style="color:#a9aac4">to</span><span style="color:#d5d6e6"> != </span><span style="color:#6cc6ec">address</span><span style="color:#d5d6e6">(</span><span style="color:#ececf5">0</span><span style="color:#d5d6e6">));</span></div>
<div style="left:735px;top:825.76px;font:24px/24px 'Liberation Mono';white-space:pre;transform:scaleY(1.12);transform-origin:0 18.24px;-webkit-text-stroke:0.45px"><span style="color:#a9aac4">        </span><span style="color:#43d2a3">require</span><span style="color:#d5d6e6">(</span><span style="color:#a9aac4">_balances</span><span style="color:#d5d6e6">[</span><span style="color:#e5bd80">msg.sender</span><span style="color:#d5d6e6">]</span><span style="color:#d5d6e6"> &gt;= </span><span style="color:#a9aac4">value</span><span style="color:#d5d6e6">);</span></div>
<div style="left:735px;top:857.76px;font:24px/24px 'Liberation Mono';white-space:pre;transform:scaleY(1.12);transform-origin:0 18.24px;-webkit-text-stroke:0.45px"><span style="color:#a9aac4">        </span><span style="color:#43d2a3">require</span><span style="color:#d5d6e6">(</span><span style="color:#a9aac4">_balances</span><span style="color:#d5d6e6">[</span><span style="color:#a9aac4">to</span><span style="color:#d5d6e6">]</span><span style="color:#d5d6e6"> + </span><span style="color:#a9aac4">value</span><span style="color:#d5d6e6"> &gt;= </span><span style="color:#a9aac4">_balances</span><span style="color:#d5d6e6">[</span><span style="color:#a9aac4">to</span><span style="color:#d5d6e6">]);</span></div>
<div style="left:735px;top:921.76px;font:24px/24px 'Liberation Mono';white-space:pre;transform:scaleY(1.12);transform-origin:0 18.24px;-webkit-text-stroke:0.45px"><span style="color:#a9aac4">        _balances</span><span style="color:#d5d6e6">[</span><span style="color:#e5bd80">msg.sender</span><span style="color:#d5d6e6">]</span><span style="color:#d5d6e6"> -= </span><span style="color:#a9aac4">value;</span></div>
<div style="left:735px;top:953.76px;font:24px/24px 'Liberation Mono';white-space:pre;transform:scaleY(1.12);transform-origin:0 18.24px;-webkit-text-stroke:0.45px"><span style="color:#a9aac4">        _balances</span><span style="color:#d5d6e6">[</span><span style="color:#a9aac4">to</span><span style="color:#d5d6e6">]</span><span style="color:#d5d6e6"> += </span><span style="color:#a9aac4">value;</span></div>
<div style="left:735px;top:985.76px;font:24px/24px 'Liberation Mono';white-space:pre;transform:scaleY(1.12);transform-origin:0 18.24px;-webkit-text-stroke:0.45px"><span style="color:#a9aac4">        </span><span style="color:#f6a66c">emit</span><span style="color:#a9aac4"> Transfer</span><span style="color:#d5d6e6">(</span><span style="color:#e5bd80">msg.sender</span><span style="color:#a9aac4">, to, value</span><span style="color:#d5d6e6">);</span></div>
<div style="left:735px;top:1017.76px;font:24px/24px 'Liberation Mono';white-space:pre;transform:scaleY(1.12);transform-origin:0 18.24px;-webkit-text-stroke:0.45px"><span style="color:#d5d6e6">    }</span></div>
<div style="left:735px;top:1049.76px;font:24px/24px 'Liberation Mono';white-space:pre;transform:scaleY(1.12);transform-origin:0 18.24px;-webkit-text-stroke:0.45px"><span style="color:#d5d6e6">}</span></div>
<div style="left:794.5px;top:372px;width:1px;height:64px;background:repeating-linear-gradient(#3b3b3e 0 2px, transparent 2px 4px)"></div>
<div style="left:794.5px;top:532px;width:1px;height:32px;background:repeating-linear-gradient(#3b3b3e 0 2px, transparent 2px 4px)"></div>
<div style="left:794.5px;top:660px;width:1px;height:32px;background:repeating-linear-gradient(#3b3b3e 0 2px, transparent 2px 4px)"></div>
<div style="left:794.5px;top:788px;width:1px;height:96px;background:repeating-linear-gradient(#3b3b3e 0 2px, transparent 2px 4px)"></div>
<div style="left:794.5px;top:916px;width:1px;height:96px;background:repeating-linear-gradient(#3b3b3e 0 2px, transparent 2px 4px)"></div>
<div style="left:630px;top:1428px;width:3826px;height:49px;background:#2a2c3f;"></div>
<div style="left:630px;top:1477px;width:3826px;height:1px;background:#31344a;"></div>
<div style="left:630px;top:1478px;width:3826px;height:68px;background:#2a2c3f;"></div>
<svg style="left:645.4px;top:1501.7px;width:15.899999999999977px;height:18.299999999999955px;" viewBox="0 0 16 18.3" preserveAspectRatio="none"><polyline points="2,2 8,7.5 14,2" fill="none" stroke="#a9abc6" stroke-width="3.6" stroke-linecap="round" stroke-linejoin="round"/><polyline points="2,10.5 8,16 14,10.5" fill="none" stroke="#a9abc6" stroke-width="3.6" stroke-linecap="round" stroke-linejoin="round"/></svg>
<svg style="left:693px;top:1499.3px;width:24px;height:23.799999999999955px;" viewBox="0 0 24 24" preserveAspectRatio="none"><circle cx="12" cy="12" r="10" fill="none" stroke="#a9abc6" stroke-width="3.4"/><line x1="5" y1="5" x2="19" y2="19" stroke="#a9abc6" stroke-width="3.4"/></svg>
<div style="left:748.31px;top:1499.10px;font-family:'Liberation Sans';font-weight:normal;font-size:24.00px;line-height:24.00px;color:#a9abc6;white-space:pre;transform:scaleX(1.1372);transform-origin:0 0;-webkit-text-stroke:0.3px;">0</div>
<div style="left:796px;top:1492.3px;width:32px;height:31.700000000000045px;background:#2c2e44;border:2px solid #4d4f66;border-radius:4px"></div>
<div style="left:842.42px;top:1497.31px;font-family:'Liberation Sans';font-weight:normal;font-size:26.11px;line-height:26.11px;color:#a9abc6;white-space:pre;transform:scaleX(1.0278);transform-origin:0 0;-webkit-text-stroke:0.3px;">listen on network</div>
<svg style="left:1110.5px;top:1500px;width:22.799999999999955px;height:22.90000000000009px;" viewBox="0 0 512 512" preserveAspectRatio="none"><path d="M505 442.7L405.3 343c-4.5-4.5-10.6-7-17-7H372c27.6-35.3 44-79.7 44-128C416 93.1 322.9 0 208 0S0 93.1 0 208s93.1 208 208 208c48.3 0 92.7-16.4 128-44v16.3c0 6.4 2.5 12.5 7 17l99.7 99.7c9.4 9.4 24.6 9.4 33.9 0l28.3-28.3c9.4-9.4 9.4-24.6.1-34zM208 336c-70.7 0-128-57.2-128-128 0-70.7 57.2-128 128-128 70.7 0 128 57.2 128 128 0 70.7-57.2 128-128 128z" fill="#a9abc6"/></svg>
<div style="left:1154.3px;top:1486.2px;width:564.7px;height:50.799999999999955px;background:#35384c;border:2px solid #3f4259;border-radius:4px"></div>
<div style="left:1179.59px;top:1496.85px;font-family:'Liberation Sans';font-weight:normal;font-size:29.58px;line-height:29.58px;color:#8c9198;white-space:pre;transform:scaleX(0.9522);transform-origin:0 0;-webkit-text-stroke:0.3px;">Search with transaction hash or address</div>
<svg style="left:678px;top:1551px;width:40px;height:40px;" viewBox="0 0 40 40" preserveAspectRatio="none"><circle cx="20" cy="20" r="19.3" fill="#32ba89"/><polyline points="9.5,19.5 16,26 29,13" fill="none" stroke="#222336" stroke-width="4.5" stroke-linecap="square"/></svg>
<div style="left:758.3px;top:1561.36px;font:24px/24px 'Liberation Mono';color:#adaec8;white-space:pre"><span style="font-weight:bold">[vm]</span></div>
<div style="left:837.3px;top:1561.36px;font:24px/24px 'Liberation Mono';color:#adaec8;white-space:pre"><span style="font-weight:bold">from:</span></div>
<div style="left:923.2px;top:1561.36px;font:24px/24px 'Liberation Mono';color:#adaec8;white-space:pre"><span style="font-weight:normal">0x502...993e6</span></div>
<div style="left:1118px;top:1561.36px;font:24px/24px 'Liberation Mono';color:#adaec8;white-space:pre"><span style="font-weight:bold">to:</span></div>
<div style="left:1177.6px;top:1561.36px;font:24px/24px 'Liberation Mono';color:#adaec8;white-space:pre"><span style="font-weight:normal">Test.transfer(address,uint256)</span></div>
<div style="left:1624px;top:1561.36px;font:24px/24px 'Liberation Mono';color:#adaec8;white-space:pre"><span style="font-weight:normal">0xe2b...4c5f0</span></div>
<div style="left:1821.4px;top:1561.36px;font:24px/24px 'Liberation Mono';color:#adaec8;white-space:pre"><span style="font-weight:bold">value:</span></div>
<div style="left:1922.6px;top:1561.36px;font:24px/24px 'Liberation Mono';color:#adaec8;white-space:pre"><span style="font-weight:normal">0 wei</span></div>
<div style="left:2003px;top:1561.36px;font:24px/24px 'Liberation Mono';color:#adaec8;white-space:pre"><span style="font-weight:bold">data:</span></div>
<div style="left:2090.3px;top:1561.36px;font:24px/24px 'Liberation Mono';color:#adaec8;white-space:pre"><span style="font-weight:normal">0xa90...00001</span></div>
<div style="left:2285.7px;top:1561.36px;font:24px/24px 'Liberation Mono';color:#adaec8;white-space:pre"><span style="font-weight:bold">logs:</span></div>
<div style="left:2374px;top:1561.36px;font:24px/24px 'Liberation Mono';color:#adaec8;white-space:pre"><span style="font-weight:normal">1</span></div>
<div style="left:2396.8px;top:1561.36px;font:24px/24px 'Liberation Mono';color:#adaec8;white-space:pre"><span style="font-weight:bold">hash:</span></div>
<div style="left:2485.1px;top:1561.36px;font:24px/24px 'Liberation Mono';color:#adaec8;white-space:pre"><span style="font-weight:normal">0x9a4...c4066</span></div>
<div style="left:699.3px;top:1655.96px;font:24px/24px 'Liberation Mono';color:#adaec8;white-space:pre"><span style="font-weight:bold">status</span></div>
<div style="left:1771.4px;top:1655.96px;font:24px/24px 'Liberation Mono';color:#adaec8;white-space:pre"><span style="font-weight:normal">0x1 Transaction mined and execution succeed</span></div>
<div style="left:699.3px;top:1713.66px;font:24px/24px 'Liberation Mono';color:#adaec8;white-space:pre"><span style="font-weight:bold">transaction hash</span></div>
<div style="left:1771.4px;top:1713.66px;font:24px/24px 'Liberation Mono';color:#adaec8;white-space:pre"><span style="font-weight:normal">0x9a45f5db7269670894f0c8e64b0a4b86aceebf424b4c28e78394806e6bdc4066</span></div>
<svg style="left:2762.7125px;top:1711.1000000000001px;width:21.0px;height:24.0px;" viewBox="0 0 448 512" preserveAspectRatio="none"><path d="M433.941 65.941l-51.882-51.882A48 48 0 0 0 348.118 0H176c-26.51 0-48 21.49-48 48v48H48c-26.51 0-48 21.49-48 48v320c0 26.51 21.49 48 48 48h224c26.51 0 48-21.49 48-48v-48h80c26.51 0 48-21.49 48-48V99.882a48 48 0 0 0-14.059-33.941zM266 464H54a6 6 0 0 1-6-6V150a6 6 0 0 1 6-6h74v224c0 26.51 21.49 48 48 48h96v42a6 6 0 0 1-6 6zm128-96H182a6 6 0 0 1-6-6V54a6 6 0 0 1 6-6h106v88c0 13.255 10.745 24 24 24h88v202a6 6 0 0 1-6 6zm6-256h-64V48h9.632c1.591 0 3.117.632 4.243 1.757l48.368 48.368a6 6 0 0 1 1.757 4.243V112z" fill="#adaec8"/></svg>
<div style="left:699.3px;top:1785.56px;font:24px/24px 'Liberation Mono';color:#adaec8;white-space:pre"><span style="font-weight:bold">from</span></div>
<div style="left:1771.4px;top:1785.56px;font:24px/24px 'Liberation Mono';color:#adaec8;white-space:pre"><span style="font-weight:normal">0x502318efbe1226d8c6ac4af05ae09f03ae2993e6</span></div>
<svg style="left:2416.9625px;top:1783.0px;width:21.0px;height:24.0px;" viewBox="0 0 448 512" preserveAspectRatio="none"><path d="M433.941 65.941l-51.882-51.882A48 48 0 0 0 348.118 0H176c-26.51 0-48 21.49-48 48v48H48c-26.51 0-48 21.49-48 48v320c0 26.51 21.49 48 48 48h224c26.51 0 48-21.49 48-48v-48h80c26.51 0 48-21.49 48-48V99.882a48 48 0 0 0-14.059-33.941zM266 464H54a6 6 0 0 1-6-6V150a6 6 0 0 1 6-6h74v224c0 26.51 21.49 48 48 48h96v42a6 6 0 0 1-6 6zm128-96H182a6 6 0 0 1-6-6V54a6 6 0 0 1 6-6h106v88c0 13.255 10.745 24 24 24h88v202a6 6 0 0 1-6 6zm6-256h-64V48h9.632c1.591 0 3.117.632 4.243 1.757l48.368 48.368a6 6 0 0 1 1.757 4.243V112z" fill="#adaec8"/></svg>
<div style="left:699.3px;top:1857.56px;font:24px/24px 'Liberation Mono';color:#adaec8;white-space:pre"><span style="font-weight:bold">to</span></div>
<div style="left:1771.4px;top:1857.56px;font:24px/24px 'Liberation Mono';color:#adaec8;white-space:pre"><span style="font-weight:normal">Test.transfer(address,uint256) 0xe2be527760c7503716dfe923fc453fd14514c5f0</span></div>
<svg style="left:2863.55625px;top:1855.0px;width:21.0px;height:24.0px;" viewBox="0 0 448 512" preserveAspectRatio="none"><path d="M433.941 65.941l-51.882-51.882A48 48 0 0 0 348.118 0H176c-26.51 0-48 21.49-48 48v48H48c-26.51 0-48 21.49-48 48v320c0 26.51 21.49 48 48 48h224c26.51 0 48-21.49 48-48v-48h80c26.51 0 48-21.49 48-48V99.882a48 48 0 0 0-14.059-33.941zM266 464H54a6 6 0 0 1-6-6V150a6 6 0 0 1 6-6h74v224c0 26.51 21.49 48 48 48h96v42a6 6 0 0 1-6 6zm128-96H182a6 6 0 0 1-6-6V54a6 6 0 0 1 6-6h106v88c0 13.255 10.745 24 24 24h88v202a6 6 0 0 1-6 6zm6-256h-64V48h9.632c1.591 0 3.117.632 4.243 1.757l48.368 48.368a6 6 0 0 1 1.757 4.243V112z" fill="#adaec8"/></svg>
<div style="left:699.3px;top:1929.86px;font:24px/24px 'Liberation Mono';color:#adaec8;white-space:pre"><span style="font-weight:bold">gas</span></div>
<div style="left:1771.4px;top:1929.86px;font:24px/24px 'Liberation Mono';color:#adaec8;white-space:pre"><span style="font-weight:normal">3000000 gas</span></div>
<svg style="left:1970.36875px;top:1927.3px;width:21.0px;height:24.0px;" viewBox="0 0 448 512" preserveAspectRatio="none"><path d="M433.941 65.941l-51.882-51.882A48 48 0 0 0 348.118 0H176c-26.51 0-48 21.49-48 48v48H48c-26.51 0-48 21.49-48 48v320c0 26.51 21.49 48 48 48h224c26.51 0 48-21.49 48-48v-48h80c26.51 0 48-21.49 48-48V99.882a48 48 0 0 0-14.059-33.941zM266 464H54a6 6 0 0 1-6-6V150a6 6 0 0 1 6-6h74v224c0 26.51 21.49 48 48 48h96v42a6 6 0 0 1-6 6zm128-96H182a6 6 0 0 1-6-6V54a6 6 0 0 1 6-6h106v88c0 13.255 10.745 24 24 24h88v202a6 6 0 0 1-6 6zm6-256h-64V48h9.632c1.591 0 3.117.632 4.243 1.757l48.368 48.368a6 6 0 0 1 1.757 4.243V112z" fill="#adaec8"/></svg>
<div style="left:699.3px;top:2001.26px;font:24px/24px 'Liberation Mono';color:#adaec8;white-space:pre"><span style="font-weight:bold">transaction cost</span></div>
<div style="left:1771.4px;top:2001.26px;font:24px/24px 'Liberation Mono';color:#adaec8;white-space:pre"><span style="font-weight:normal">54671 gas</span></div>
<svg style="left:1941.55625px;top:1998.7px;width:21.0px;height:24.0px;" viewBox="0 0 448 512" preserveAspectRatio="none"><path d="M433.941 65.941l-51.882-51.882A48 48 0 0 0 348.118 0H176c-26.51 0-48 21.49-48 48v48H48c-26.51 0-48 21.49-48 48v320c0 26.51 21.49 48 48 48h224c26.51 0 48-21.49 48-48v-48h80c26.51 0 48-21.49 48-48V99.882a48 48 0 0 0-14.059-33.941zM266 464H54a6 6 0 0 1-6-6V150a6 6 0 0 1 6-6h74v224c0 26.51 21.49 48 48 48h96v42a6 6 0 0 1-6 6zm128-96H182a6 6 0 0 1-6-6V54a6 6 0 0 1 6-6h106v88c0 13.255 10.745 24 24 24h88v202a6 6 0 0 1-6 6zm6-256h-64V48h9.632c1.591 0 3.117.632 4.243 1.757l48.368 48.368a6 6 0 0 1 1.757 4.243V112z" fill="#adaec8"/></svg>
<div style="left:699.3px;top:2073.46px;font:24px/24px 'Liberation Mono';color:#adaec8;white-space:pre"><span style="font-weight:bold">execution cost</span></div>
<div style="left:1771.4px;top:2073.46px;font:24px/24px 'Liberation Mono';color:#adaec8;white-space:pre"><span style="font-weight:normal">31799 gas</span></div>
<svg style="left:1941.55625px;top:2070.8999999999996px;width:21.0px;height:24.0px;" viewBox="0 0 448 512" preserveAspectRatio="none"><path d="M433.941 65.941l-51.882-51.882A48 48 0 0 0 348.118 0H176c-26.51 0-48 21.49-48 48v48H48c-26.51 0-48 21.49-48 48v320c0 26.51 21.49 48 48 48h224c26.51 0 48-21.49 48-48v-48h80c26.51 0 48-21.49 48-48V99.882a48 48 0 0 0-14.059-33.941zM266 464H54a6 6 0 0 1-6-6V150a6 6 0 0 1 6-6h74v224c0 26.51 21.49 48 48 48h96v42a6 6 0 0 1-6 6zm128-96H182a6 6 0 0 1-6-6V54a6 6 0 0 1 6-6h106v88c0 13.255 10.745 24 24 24h88v202a6 6 0 0 1-6 6zm6-256h-64V48h9.632c1.591 0 3.117.632 4.243 1.757l48.368 48.368a6 6 0 0 1 1.757 4.243V112z" fill="#adaec8"/></svg>
<div style="left:699.3px;top:2145.36px;font:24px/24px 'Liberation Mono';color:#adaec8;white-space:pre"><span style="font-weight:bold">hash</span></div>
<div style="left:1771.4px;top:2145.36px;font:24px/24px 'Liberation Mono';color:#adaec8;white-space:pre"><span style="font-weight:normal">0x9a45f5db7269670894f0c8e64b0a4b86aceebf424b4c28e78394806e6bdc4066</span></div>
<svg style="left:2762.7125px;top:2142.7999999999997px;width:21.0px;height:24.0px;" viewBox="0 0 448 512" preserveAspectRatio="none"><path d="M433.941 65.941l-51.882-51.882A48 48 0 0 0 348.118 0H176c-26.51 0-48 21.49-48 48v48H48c-26.51 0-48 21.49-48 48v320c0 26.51 21.49 48 48 48h224c26.51 0 48-21.49 48-48v-48h80c26.51 0 48-21.49 48-48V99.882a48 48 0 0 0-14.059-33.941zM266 464H54a6 6 0 0 1-6-6V150a6 6 0 0 1 6-6h74v224c0 26.51 21.49 48 48 48h96v42a6 6 0 0 1-6 6zm128-96H182a6 6 0 0 1-6-6V54a6 6 0 0 1 6-6h106v88c0 13.255 10.745 24 24 24h88v202a6 6 0 0 1-6 6zm6-256h-64V48h9.632c1.591 0 3.117.632 4.243 1.757l48.368 48.368a6 6 0 0 1 1.757 4.243V112z" fill="#adaec8"/></svg>
<div style="left:699.3px;top:2217.86px;font:24px/24px 'Liberation Mono';color:#adaec8;white-space:pre"><span style="font-weight:bold">input</span></div>
<div style="left:1771.4px;top:2217.86px;font:24px/24px 'Liberation Mono';color:#adaec8;white-space:pre"><span style="font-weight:normal">0xa90...00001</span></div>
<svg style="left:1999.18125px;top:2215.2999999999997px;width:21.0px;height:24.0px;" viewBox="0 0 448 512" preserveAspectRatio="none"><path d="M433.941 65.941l-51.882-51.882A48 48 0 0 0 348.118 0H176c-26.51 0-48 21.49-48 48v48H48c-26.51 0-48 21.49-48 48v320c0 26.51 21.49 48 48 48h224c26.51 0 48-21.49 48-48v-48h80c26.51 0 48-21.49 48-48V99.882a48 48 0 0 0-14.059-33.941zM266 464H54a6 6 0 0 1-6-6V150a6 6 0 0 1 6-6h74v224c0 26.51 21.49 48 48 48h96v42a6 6 0 0 1-6 6zm128-96H182a6 6 0 0 1-6-6V54a6 6 0 0 1 6-6h106v88c0 13.255 10.745 24 24 24h88v202a6 6 0 0 1-6 6zm6-256h-64V48h9.632c1.591 0 3.117.632 4.243 1.757l48.368 48.368a6 6 0 0 1 1.757 4.243V112z" fill="#adaec8"/></svg>
<div style="left:699.3px;top:2288.96px;font:24px/24px 'Liberation Mono';color:#adaec8;white-space:pre"><span style="font-weight:bold">decoded input</span></div>
<div style="left:1771.4px;top:2288.96px;font:24px/24px 'Liberation Mono';color:#adaec8;white-space:pre"><span style="font-weight:normal">{ &quot;address to&quot;: &quot;0x71430Fd8c82cC7b991A8455FC6ea5B37A06d393F&quot;, &quot;uint256 value&quot;: { &quot;_hex&quot;: &quot;0x01&quot; } }</span></div>
<svg style="left:3238.11875px;top:2286.3999999999996px;width:21.0px;height:24.0px;" viewBox="0 0 448 512" preserveAspectRatio="none"><path d="M433.941 65.941l-51.882-51.882A48 48 0 0 0 348.118 0H176c-26.51 0-48 21.49-48 48v48H48c-26.51 0-48 21.49-48 48v320c0 26.51 21.49 48 48 48h224c26.51 0 48-21.49 48-48v-48h80c26.51 0 48-21.49 48-48V99.882a48 48 0 0 0-14.059-33.941zM266 464H54a6 6 0 0 1-6-6V150a6 6 0 0 1 6-6h74v224c0 26.51 21.49 48 48 48h96v42a6 6 0 0 1-6 6zm128-96H182a6 6 0 0 1-6-6V54a6 6 0 0 1 6-6h106v88c0 13.255 10.745 24 24 24h88v202a6 6 0 0 1-6 6zm6-256h-64V48h9.632c1.591 0 3.117.632 4.243 1.757l48.368 48.368a6 6 0 0 1 1.757 4.243V112z" fill="#adaec8"/></svg>
<div style="left:699.3px;top:2361.46px;font:24px/24px 'Liberation Mono';color:#adaec8;white-space:pre"><span style="font-weight:bold">decoded output</span></div>
<div style="left:1771.4px;top:2361.46px;font:24px/24px 'Liberation Mono';color:#adaec8;white-space:pre"><span style="font-weight:normal">{ &quot;0&quot;: &quot;bool: false&quot; }</span></div>
<svg style="left:2128.8375px;top:2358.8999999999996px;width:21.0px;height:24.0px;" viewBox="0 0 448 512" preserveAspectRatio="none"><path d="M433.941 65.941l-51.882-51.882A48 48 0 0 0 348.118 0H176c-26.51 0-48 21.49-48 48v48H48c-26.51 0-48 21.49-48 48v320c0 26.51 21.49 48 48 48h224c26.51 0 48-21.49 48-48v-48h80c26.51 0 48-21.49 48-48V99.882a48 48 0 0 0-14.059-33.941zM266 464H54a6 6 0 0 1-6-6V150a6 6 0 0 1 6-6h74v224c0 26.51 21.49 48 48 48h96v42a6 6 0 0 1-6 6zm128-96H182a6 6 0 0 1-6-6V54a6 6 0 0 1 6-6h106v88c0 13.255 10.745 24 24 24h88v202a6 6 0 0 1-6 6zm6-256h-64V48h9.632c1.591 0 3.117.632 4.243 1.757l48.368 48.368a6 6 0 0 1 1.757 4.243V112z" fill="#adaec8"/></svg>
<div style="left:699.3px;top:2561.86px;font:24px/24px 'Liberation Mono';color:#adaec8;white-space:pre"><span style="font-weight:bold">value</span></div>
<div style="left:1771.4px;top:2561.86px;font:24px/24px 'Liberation Mono';color:#adaec8;white-space:pre"><span style="font-weight:normal">0 wei</span></div>
<svg style="left:1883.93125px;top:2559.2999999999997px;width:21.0px;height:24.0px;" viewBox="0 0 448 512" preserveAspectRatio="none"><path d="M433.941 65.941l-51.882-51.882A48 48 0 0 0 348.118 0H176c-26.51 0-48 21.49-48 48v48H48c-26.51 0-48 21.49-48 48v320c0 26.51 21.49 48 48 48h224c26.51 0 48-21.49 48-48v-48h80c26.51 0 48-21.49 48-48V99.882a48 48 0 0 0-14.059-33.941zM266 464H54a6 6 0 0 1-6-6V150a6 6 0 0 1 6-6h74v224c0 26.51 21.49 48 48 48h96v42a6 6 0 0 1-6 6zm128-96H182a6 6 0 0 1-6-6V54a6 6 0 0 1 6-6h106v88c0 13.255 10.745 24 24 24h88v202a6 6 0 0 1-6 6zm6-256h-64V48h9.632c1.591 0 3.117.632 4.243 1.757l48.368 48.368a6 6 0 0 1 1.757 4.243V112z" fill="#adaec8"/></svg>
<div style="left:699.3px;top:2418.96px;font:24px/24px 'Liberation Mono';color:#adaec8;white-space:pre"><span style="font-weight:bold">logs</span></div>
<div style="left:1771.4px;top:2420.06px;font:24px/24px 'Liberation Mono';color:#adaec8;white-space:pre"><span style="font-weight:normal">[ { &quot;from&quot;: &quot;0xe2be527760c7503716dfe923fc453fd14514c5f0&quot;, &quot;topic&quot;: &quot;0xddf252ad1be2c89b69c2b068fc378daa952ba7f163c4a11628f55a4df523b3ef&quot;, &quot;event&quot;: &quot;Transfer&quot;, &quot;args&quot;: { &quot;0&quot;:</span></div>
<div style="left:1771.4px;top:2448.06px;font:24px/24px 'Liberation Mono';color:#adaec8;white-space:pre"><span style="font-weight:normal">&quot;0x502318efbE1226D8C6Ac4af05aE09f03ae2993e6&quot;, &quot;1&quot;: &quot;0x71430Fd8c82cC7b991A8455FC6ea5B37A06d393F&quot;, &quot;2&quot;: &quot;1&quot;, &quot;from&quot;: &quot;0x502318efbE1226D8C6Ac4af05aE09f03ae2993e6&quot;, &quot;to&quot;:</span></div>
<div style="left:1771.4px;top:2490.16px;font:24px/24px 'Liberation Mono';color:#adaec8;white-space:pre"><span style="font-weight:normal">&quot;0x71430Fd8c82cC7b991A8455FC6ea5B37A06d393F&quot;, &quot;value&quot;: &quot;1&quot;, &quot;length&quot;: 3 } } ]</span></div>
<svg style="left:2921.18125px;top:2487.6px;width:21.0px;height:24.0px;" viewBox="0 0 448 512" preserveAspectRatio="none"><path d="M433.941 65.941l-51.882-51.882A48 48 0 0 0 348.118 0H176c-26.51 0-48 21.49-48 48v48H48c-26.51 0-48 21.49-48 48v320c0 26.51 21.49 48 48 48h224c26.51 0 48-21.49 48-48v-48h80c26.51 0 48-21.49 48-48V99.882a48 48 0 0 0-14.059-33.941zM266 464H54a6 6 0 0 1-6-6V150a6 6 0 0 1 6-6h74v224c0 26.51 21.49 48 48 48h96v42a6 6 0 0 1-6 6zm128-96H182a6 6 0 0 1-6-6V54a6 6 0 0 1 6-6h106v88c0 13.255 10.745 24 24 24h88v202a6 6 0 0 1-6 6zm6-256h-64V48h9.632c1.591 0 3.117.632 4.243 1.757l48.368 48.368a6 6 0 0 1 1.757 4.243V112z" fill="#adaec8"/></svg>
<svg style="left:2997.18125px;top:2487.6px;width:21.0px;height:24.0px;" viewBox="0 0 448 512" preserveAspectRatio="none"><path d="M433.941 65.941l-51.882-51.882A48 48 0 0 0 348.118 0H176c-26.51 0-48 21.49-48 48v48H48c-26.51 0-48 21.49-48 48v320c0 26.51 21.49 48 48 48h224c26.51 0 48-21.49 48-48v-48h80c26.51 0 48-21.49 48-48V99.882a48 48 0 0 0-14.059-33.941zM266 464H54a6 6 0 0 1-6-6V150a6 6 0 0 1 6-6h74v224c0 26.51 21.49 48 48 48h96v42a6 6 0 0 1-6 6zm128-96H182a6 6 0 0 1-6-6V54a6 6 0 0 1 6-6h106v88c0 13.255 10.745 24 24 24h88v202a6 6 0 0 1-6 6zm6-256h-64V48h9.632c1.591 0 3.117.632 4.243 1.757l48.368 48.368a6 6 0 0 1 1.757 4.243V112z" fill="#adaec8"/></svg>
<div style="left:666px;top:2200px;width:2663px;height:146px;background:transparent;border:6px solid #ff2600;border-radius:12px"></div>
</body></html>
